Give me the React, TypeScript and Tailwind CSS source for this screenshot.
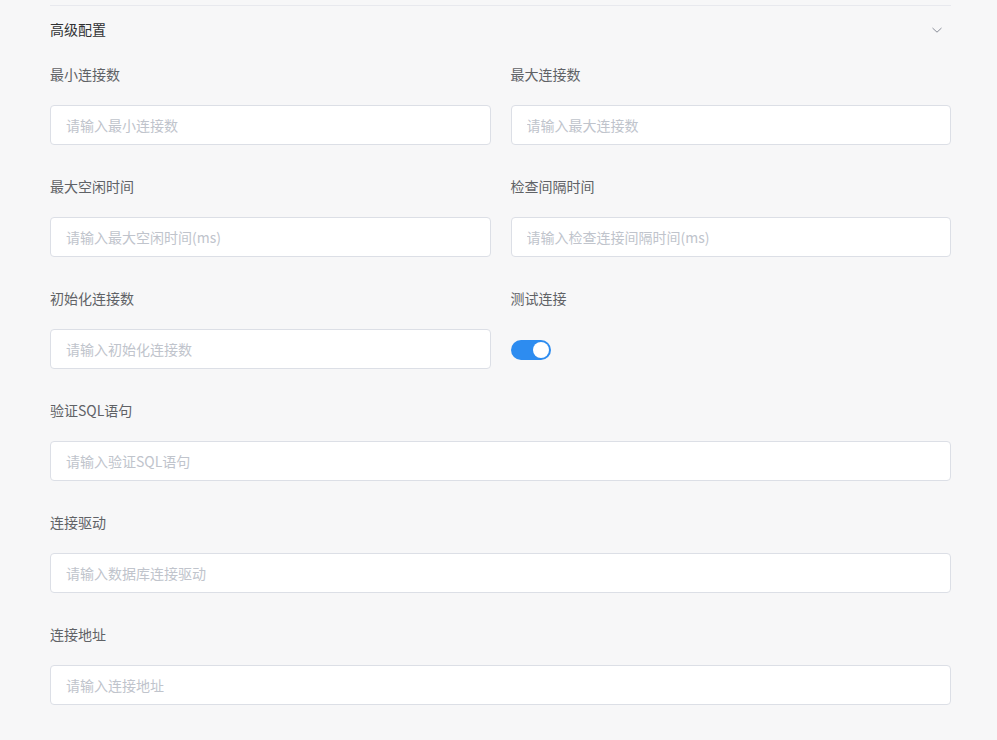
import React, { useState } from "react";

const FONT = { fontFamily: '"Noto Sans CJK SC", "Noto Sans", "Liberation Sans", sans-serif' };

function Field({ label, placeholder }: { label: string; placeholder: string }) {
  return (
    <div className="flex flex-col">
      <label className="text-[14px] leading-[22px] text-[#606266]">{label}</label>
      <input
        placeholder={placeholder}
        className="mt-[20px] h-[40px] w-full rounded-[4px] border border-[#dcdfe6] bg-white px-[15px] text-[14px] text-[#606266] outline-none placeholder:text-[#c0c4cc]"
      />
    </div>
  );
}

function Toggle({ label }: { label: string }) {
  const [on, setOn] = useState(true);
  return (
    <div className="flex flex-col">
      <span className="text-[14px] leading-[22px] text-[#606266]">{label}</span>
      <div className="mt-[20px] flex h-[40px] items-center pt-[2px]">
        <button
          type="button"
          onClick={() => setOn(!on)}
          className={
            "relative h-[20px] w-[40px] rounded-full transition-colors " +
            (on ? "bg-[#2d8cf0]" : "bg-[#dcdfe6]")
          }
        >
          <span
            className={
              "absolute top-[2px] h-[16px] w-[16px] rounded-full bg-white transition-all " +
              (on ? "left-[22px]" : "left-[2px]")
            }
          />
        </button>
      </div>
    </div>
  );
}

export default function App() {
  return (
    <div className="min-h-[740px] w-full bg-[#f7f7f8] px-[50px] pt-[5px]" style={FONT}>
      <div className="w-[901px] border-t border-[#e8e9ee]">
        {/* --- section header --- */}
        <div className="flex h-[46px] items-center justify-between">
          <span className="text-[14px] text-[#303133]">高级配置</span>
          <svg width="12" height="12" viewBox="0 0 12 12" className="mr-[8px] mt-[2px]">
            <path d="M1.5 4 L6 8.2 L10.5 4" fill="none" stroke="#8a8e99" strokeWidth="1" />
          </svg>
        </div>

        <div className="mt-[11px] flex flex-col gap-[30px]">
          <div className="grid grid-cols-2 gap-x-[20px]">
            <Field label="最小连接数" placeholder="请输入最小连接数" />
            <Field label="最大连接数" placeholder="请输入最大连接数" />
          </div>
          <div className="grid grid-cols-2 gap-x-[20px]">
            <Field label="最大空闲时间" placeholder="请输入最大空闲时间(ms)" />
            <Field label="检查间隔时间" placeholder="请输入检查连接间隔时间(ms)" />
          </div>
          <div className="grid grid-cols-2 gap-x-[20px]">
            <Field label="初始化连接数" placeholder="请输入初始化连接数" />
            <Toggle label="测试连接" />
          </div>
          <Field label="验证SQL语句" placeholder="请输入验证SQL语句" />
          <Field label="连接驱动" placeholder="请输入数据库连接驱动" />
          <Field label="连接地址" placeholder="请输入连接地址" />
        </div>
      </div>
    </div>
  );
}
